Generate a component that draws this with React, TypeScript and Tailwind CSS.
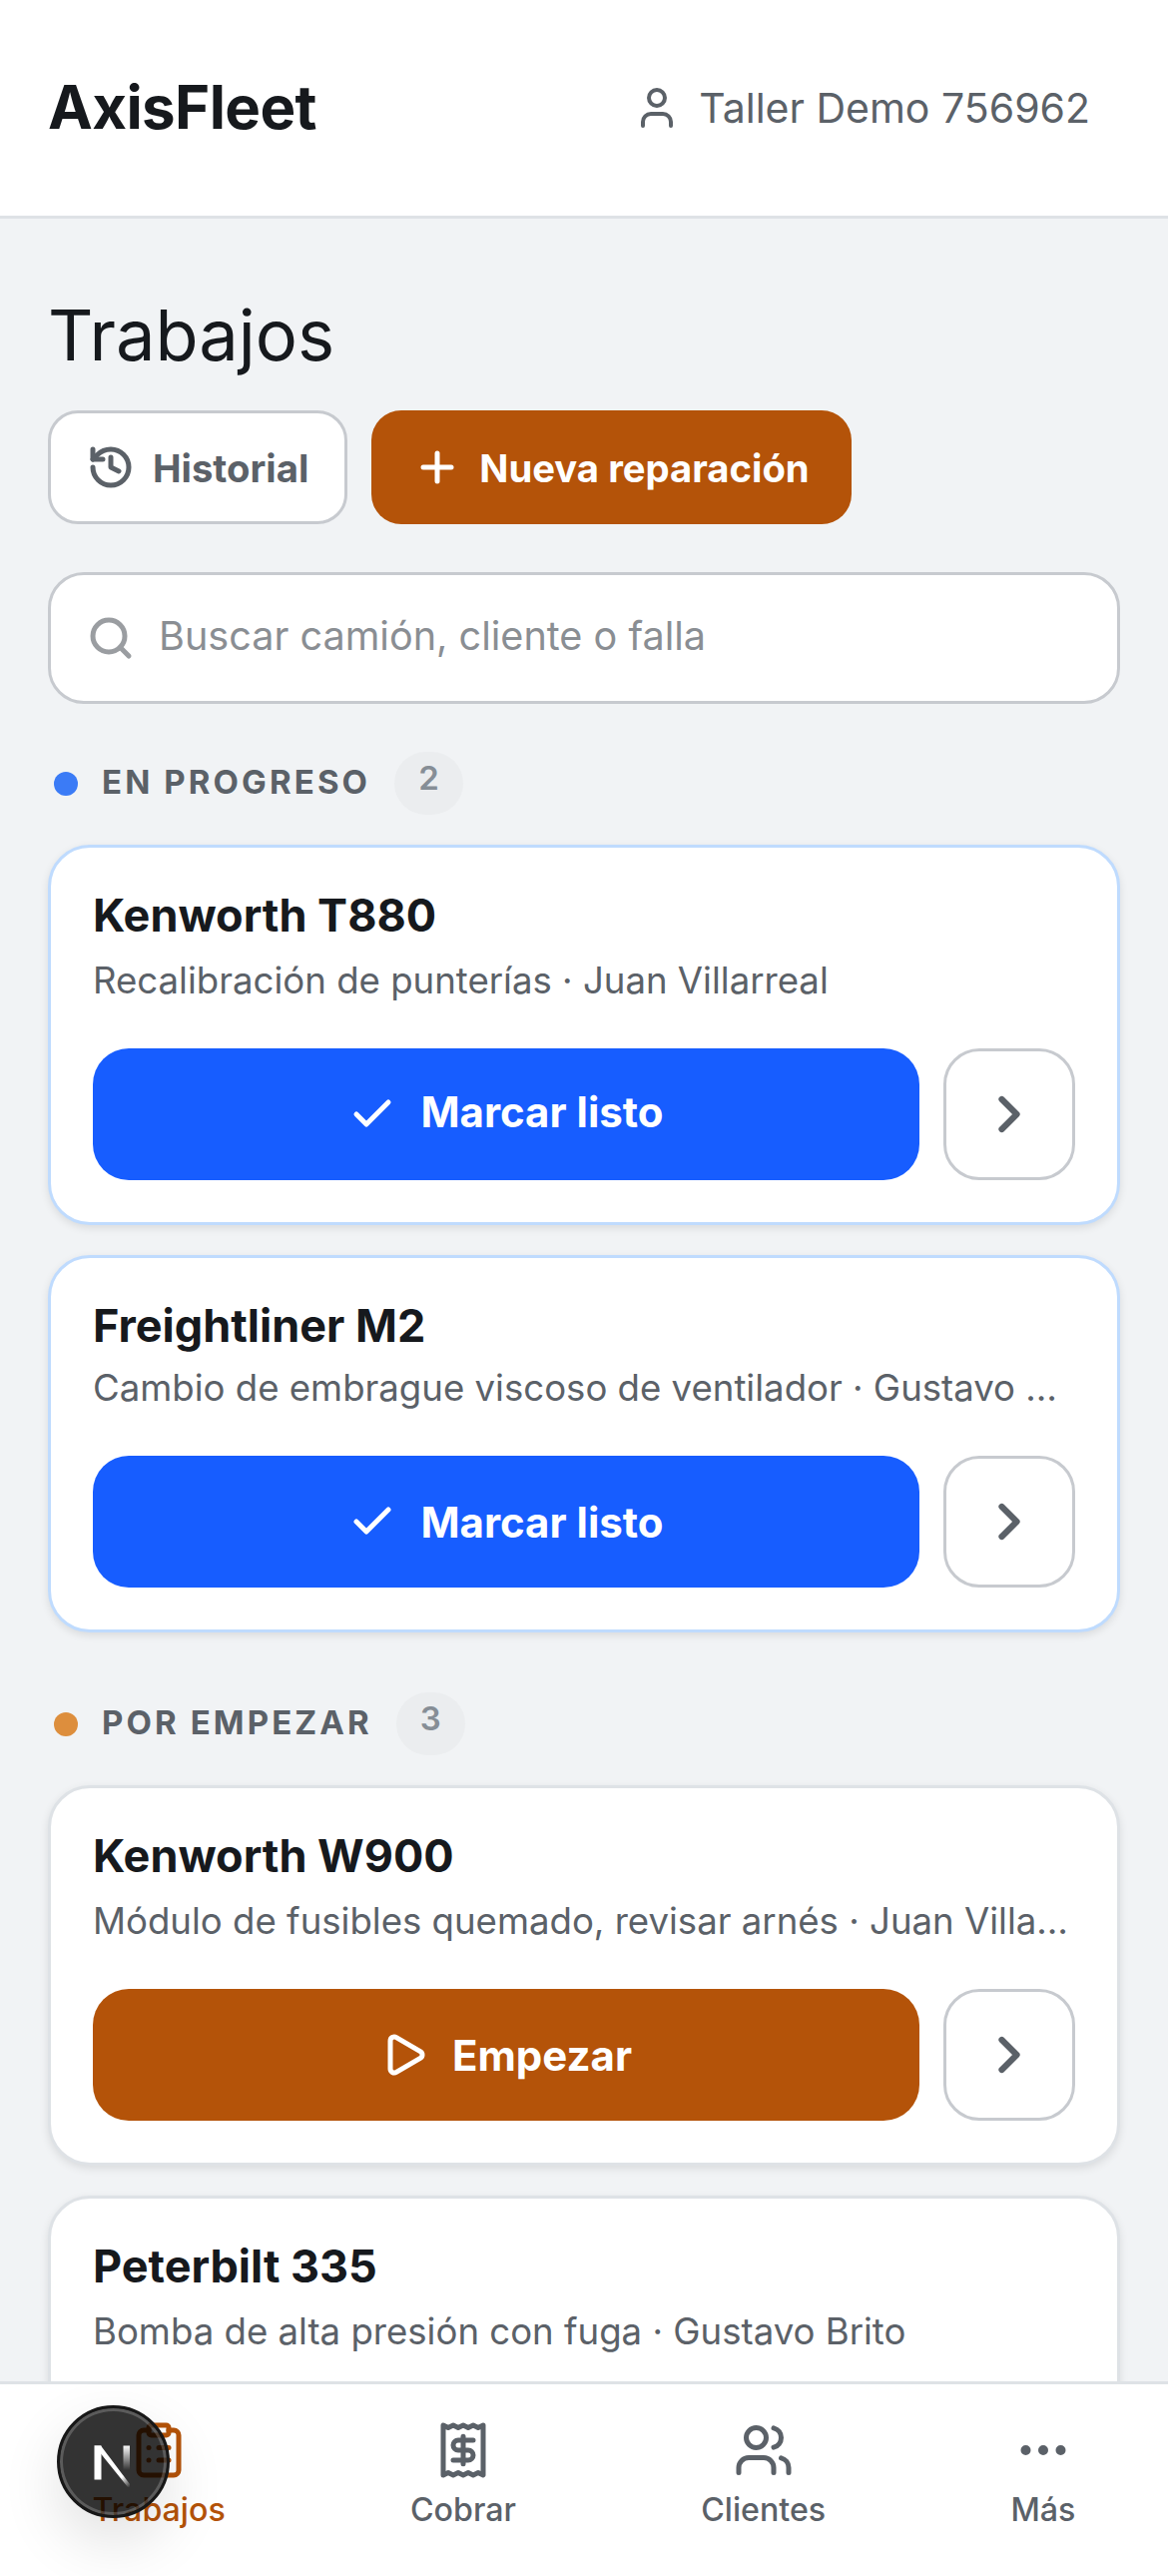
import { Check, ChevronRight, ClipboardList, Ellipsis, History, Play, Plus, Receipt, Search, User, Users } from "lucide-react";
import type { ReactNode } from "react";

function SectionHeader({ dot, label, count }: { dot: string; label: string; count: number }) {
  return (
    <div className="flex items-center gap-[24px] pl-[6px]">
      <span className={`h-[24px] w-[24px] rounded-full ${dot}`} />
      <span className="pb-[3px] text-[33px] font-bold uppercase leading-[48px] tracking-[3.1px] text-[#5b6168]">{label}</span>
      <span className="flex h-[63px] min-w-[69px] items-center justify-center rounded-full bg-[#ebedef] pb-[9px] text-[33px] font-semibold text-[#868e96]">
        {count}
      </span>
    </div>
  );
}

function JobCard({
  title,
  sub,
  tone,
  action,
  icon,
  tight,
  raised,
}: {
  title: string;
  sub: string;
  tone: "blue" | "gray";
  action: string;
  icon: ReactNode;
  tight?: boolean;
  raised?: boolean;
}) {
  return (
    <div
      className={`rounded-[42px] border-[3px] bg-white px-[42px] pb-[42px] pt-[39px] shadow-[0_3px_9px_rgba(0,0,0,0.1)] ${
        tone === "blue" ? "border-[#bfdbfe]" : "border-[#dee2e6]"
      }`}
    >
      <div className="text-[45px] font-bold leading-[57px] text-[#16191d]">{title}</div>
      <div className={`truncate text-[36.6px] leading-[54px] text-[#5b6168] ${tight ? "mt-[7px]" : "mt-[10px]"}`}>{sub}</div>
      <div className="mt-[41px] flex gap-[24px]">
        <button
          className={`flex h-[132px] flex-1 items-center justify-center gap-[24px] rounded-[36px] text-[42px] font-bold text-white ${
            tone === "blue" ? "bg-[#175dff]" : "bg-[#b45309]"
          }`}
        >
          {icon}
          <span className={raised ? "pb-[6px]" : ""}>{action}</span>
        </button>
        <button className="flex h-[132px] w-[132px] items-center justify-center rounded-[36px] border-[3px] border-[#c7cacf] bg-white text-[#5b6168]">
          <ChevronRight size={60} strokeWidth={2.5} />
        </button>
      </div>
    </div>
  );
}

function NavItem({ label, icon, active }: { label: string; icon: ReactNode; active?: boolean }) {
  return (
    <div className={`flex flex-col items-center gap-[6px] ${active ? "text-[#b45309]" : "text-[#5b6168]"}`}>
      {icon}
      <span className="text-[32.2px] font-medium leading-[48px]">{label}</span>
    </div>
  );
}

function DevBadge() {
  return (
    <div className="absolute left-[57px] top-[21px] flex h-[113px] w-[113px] items-center justify-center rounded-full border-[3px] border-[#171717] bg-[rgba(0,0,0,0.8)] shadow-[0_24px_60px_rgba(0,0,0,0.12)] ring-[3px] ring-inset ring-[rgba(255,255,255,0.2)]">
      <svg width="60" height="60" viewBox="0 0 60 60" fill="none">
        <defs>
          <linearGradient id="nd1" x1="20" y1="20" x2="46" y2="55" gradientUnits="userSpaceOnUse">
            <stop stopColor="#fff" />
            <stop offset="0.7" stopColor="#fff" />
            <stop offset="1" stopColor="#fff" stopOpacity="0" />
          </linearGradient>
          <linearGradient id="nd2" x1="43" y1="13" x2="43" y2="38" gradientUnits="userSpaceOnUse">
            <stop stopColor="#fff" />
            <stop offset="1" stopColor="#fff" stopOpacity="0" />
          </linearGradient>
        </defs>
        <rect x="10.5" y="13.5" width="7" height="34" fill="#fff" />
        <path d="M10.5 13.5h6.5L46 52v3h-2z" fill="url(#nd1)" />
        <rect x="39.5" y="13.5" width="6.5" height="26" fill="url(#nd2)" />
      </svg>
    </div>
  );
}

export default function App() {
  return (
    <div className="flex h-[2580px] w-[1170px] flex-col overflow-hidden bg-[#f1f3f5] font-['Inter',sans-serif]">
      <header className="flex h-[219px] shrink-0 items-center justify-between border-b-[3px] border-[#dee2e6] bg-white pl-[48px] pr-[78px]">
        <div className="pb-[2px] text-[60px] font-bold tracking-[-0.6px] text-[#16191d]">AxisFleet</div>
        <div className="flex items-center gap-[18px] text-[41px] text-[#5b6168]">
          <User size={48} strokeWidth={2} />
          <span className="pt-[2px]">Taller Demo 756962</span>
        </div>
      </header>

      <main className="min-h-0 flex-1 overflow-hidden px-[48px] pt-[69px]">
        <h1 className="text-[70.4px] font-normal leading-[96px] text-[#16191d]">Trabajos</h1>
        <div className="mt-[27px] flex gap-[24px]">
          <button className="flex h-[114px] items-center gap-[18px] rounded-[30px] border-[3px] border-[#c7cacf] bg-white px-[36px] text-[38.25px] font-bold text-[#5b6168]">
            <History size={48} strokeWidth={2.5} />
            <span className="pt-[3px]">Historial</span>
          </button>
          <button className="flex h-[114px] items-center gap-[18px] rounded-[30px] bg-[#b45309] px-[42px] text-[38.25px] font-bold text-white">
            <Plus size={48} strokeWidth={2.5} />
            <span className="pt-[3px]">Nueva reparación</span>
          </button>
        </div>
        <div className="mt-[48px] flex h-[132px] items-center gap-[24px] rounded-[36px] border-[3px] border-[#c7cacf] bg-white px-[36px] text-[39.6px] text-[#8a8e93]">
          <Search size={48} strokeWidth={2.5} className="text-[#9a9da1]" />
          <span className="pb-[3px]">Buscar camión, cliente o falla</span>
        </div>

        <div className="mt-[48px]">
          <SectionHeader dot="bg-[#3b7bf6]" label="En progreso" count={2} />
        </div>
        <div className="mt-[30px] flex flex-col gap-[30px]">
          <JobCard raised title="Kenworth T880" sub="Recalibración de punterías · Juan Villarreal" tone="blue" action="Marcar listo" icon={<Check size={48} strokeWidth={2.5} />} />
          <JobCard tight title="Freightliner M2" sub="Cambio de embrague viscoso de ventilador · Gustavo Brito" tone="blue" action="Marcar listo" icon={<Check size={48} strokeWidth={2.5} />} />
        </div>

        <div className="mt-[60px]">
          <SectionHeader dot="bg-[#dd8e3d]" label="Por empezar" count={3} />
        </div>
        <div className="mt-[30px] flex flex-col gap-[30px]">
          <JobCard title="Kenworth W900" sub="Módulo de fusibles quemado, revisar arnés · Juan Villarreal" tone="gray" action="Empezar" icon={<Play size={48} strokeWidth={2.5} />} />
          <JobCard title="Peterbilt 335" sub="Bomba de alta presión con fuga · Gustavo Brito" tone="gray" action="Empezar" icon={<Play size={48} strokeWidth={2.5} />} />
        </div>
      </main>

      <nav className="relative flex h-[195px] shrink-0 items-start justify-around border-t-[3px] border-[#dee2e6] bg-white pt-[36px]">
        <NavItem active label="Trabajos" icon={<ClipboardList size={60} strokeWidth={2} />} />
        <NavItem label="Cobrar" icon={<Receipt size={60} strokeWidth={2} />} />
        <NavItem label="Clientes" icon={<Users size={60} strokeWidth={2} />} />
        <NavItem label="Más" icon={<Ellipsis size={60} strokeWidth={2} />} />
        <DevBadge />
      </nav>
    </div>
  );
}
